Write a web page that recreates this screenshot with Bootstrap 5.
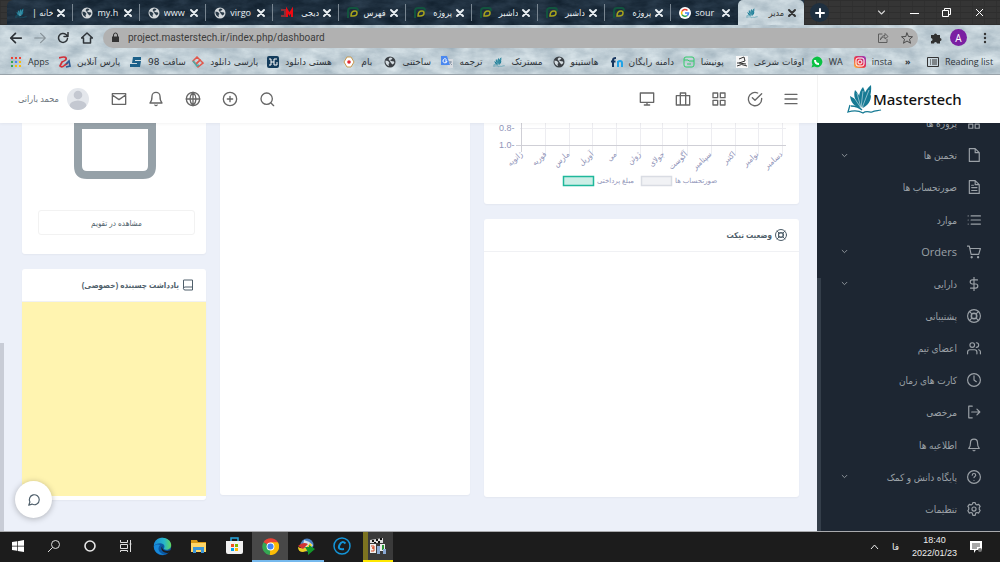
<!DOCTYPE html>
<html lang="fa">
<head>
<meta charset="utf-8">
<meta name="viewport" content="width=device-width, initial-scale=1">
<title>مدیر</title>
<link href="https://cdn.jsdelivr.net/npm/bootstrap@5.3.0/dist/css/bootstrap.min.css" rel="stylesheet">
<script src="https://cdn.jsdelivr.net/npm/bootstrap@5.3.0/dist/js/bootstrap.bundle.min.js"></script>
<style>
body{font-family:"Open Sans","DejaVu Sans Condensed","DejaVu Sans",sans-serif;font-size:10px;line-height:14px;color:#4e5e6a;background:#ecf0f9;overflow:hidden}
a{color:inherit;text-decoration:none}
button{border:0;background:none;padding:0;color:inherit}
svg{display:block;flex:none}
.ln{fill:none;stroke:currentColor;stroke-width:2;stroke-linecap:round;stroke-linejoin:round}
.i12{width:12px;height:12px}.i14{width:14px;height:14px}.i16{width:16px;height:16px}
.dim{fill:#d4d8db;color:#2a3b49}.dark{fill:#3b4045;color:#d3dbe0}
/* browser */
.strip{height:25px;background:repeating-linear-gradient(0deg,#2e2e2e 0 1px,transparent 1px 6px),repeating-linear-gradient(90deg,#303030 0 1px,#353535 1px 12px);padding-left:7px}
.tabs-dark{min-width:0;height:25px;border-radius:6px 0 0 0;background:url("data:image/svg+xml,%3Csvg xmlns='http://www.w3.org/2000/svg' width='800' height='25'%3E%3Cfilter id='a' x='0' y='0' width='100%25' height='100%25' color-interpolation-filters='sRGB'%3E%3CfeTurbulence type='fractalNoise' baseFrequency='.05 .12' numOctaves='5' seed='8'/%3E%3CfeColorMatrix values='.16 0 0 0 .04 .18 0 0 0 .095 .2 0 0 0 .145 0 0 0 0 1'/%3E%3C/filter%3E%3Crect width='800' height='25' filter='url(%23a)'/%3E%3C/svg%3E") #203141;color:#e8eef2}
.tab{min-width:0;flex:1 1 0;height:25px;padding:0 5px 0 8px;border-right:1px solid transparent;font-size:9px}
.tab:nth-child(-n+10){border-image:linear-gradient(transparent 20%,#788590 20% 80%,transparent 80%) 1}
.tab span{flex:1 1 0;min-width:0;overflow:hidden;white-space:nowrap;margin:0 2px 0 4px}
.stone{background:url("data:image/svg+xml,%3Csvg xmlns='http://www.w3.org/2000/svg' width='1000' height='50'%3E%3Cfilter id='a' x='0' y='0' width='100%25' height='100%25' color-interpolation-filters='sRGB'%3E%3CfeTurbulence type='fractalNoise' baseFrequency='.05 .1' numOctaves='5' seed='3'/%3E%3CfeColorMatrix values='.28 0 0 0 .615 .25 0 0 0 .685 .22 0 0 0 .73 0 0 0 0 1'/%3E%3C/filter%3E%3Crect width='1000' height='50' filter='url(%23a)'/%3E%3C/svg%3E") #c5d1d9;color:#2f3439}
.tab.on{border-radius:5px 5px 0 0;color:#333}
.plus{width:19px;height:19px;border-radius:50%;background:#1f3040;color:#fff;margin-left:6px}
.wins{width:196px}
.tools{height:25px;padding:0 9px}
.tools .nav-b{width:24px;margin-right:0}
.omni{height:20px;border-radius:10px;background:#b1b1b1;color:#4a4a4a;padding:0 5px 0 8px;margin-left:10px}
.omni input{border:0;background:none;padding:0;outline:0;color:#3c3c3c;font:10px/14px Roboto,sans-serif;height:18px;min-width:0}
.avatar-a{width:17px;height:17px;border-radius:50%;background:#7b1fa2;color:#fff}
.marks{display:grid;grid-template-columns:minmax(0,49fr) minmax(0,71fr) minmax(0,62fr) minmax(0,75fr) minmax(0,76fr) minmax(0,41fr) minmax(0,57fr) minmax(0,52fr) minmax(0,59fr) minmax(0,58fr) minmax(0,72fr) minmax(0,53fr) minmax(0,75fr) minmax(0,43fr) minmax(0,51fr) minmax(0,22fr) minmax(0,73fr);height:25px;padding-left:10px;border-bottom:1px solid #9aa4ab;align-items:center;font-size:9px}
.marks a{display:flex;align-items:center;gap:6px;white-space:nowrap;min-width:0}
.marks [dir=rtl]{font-family:"DejaVu Sans",sans-serif;font-size:9px}
/* app */
.app-head{height:48px;background:#fff;box-shadow:0 1px 3px #0000000d;position:relative;z-index:2;color:#666}
.app-head nav button{width:37px;height:30px}
.app-head nav+nav button{width:36px}
.userbar{padding-left:18px}
.brand{width:183px;padding-left:28px;border-left:1px solid #f2f2f2;color:#111;font:500 15px/20px "Noto Sans",sans-serif}
.brand span{margin-left:-9px}
.main{min-height:0;overflow:hidden;border-bottom:1px solid #a9aaad;position:relative}
.cols{display:grid;grid-template-columns:184fr 250fr 315fr;gap:14px;padding:0 18px 0 22px;align-items:start}
.panel{background:#fff;border-radius:3px;overflow:hidden;box-shadow:0 1px 2px #0000000a}
.panel.cut{border-radius:0 0 3px 3px}
.panel h2{font-size:8px;line-height:14px;font-weight:700;margin:0;height:33px;padding:0 12px;gap:3px;border-bottom:1px solid #f0f1f4}
.cal{height:131px;padding:0 11px 19px 16px}
.cal svg{margin-left:35px}
.btn-cal{height:25px;border:1px solid #f2f2f2;border-radius:3px;color:#4e5e6a;font-size:8px}
.note{display:block;width:100%;height:194px;background:#fff4b0;border:0;resize:none;outline:0}
.thumb{width:4px;background:#c8ccd6}
.chat{left:15px;bottom:13px;width:37px;height:37px;border-radius:50%;background:#fff;box-shadow:0 1px 6px #0004;color:#4e5e6a}
.side{width:183px;background:#1d2632;color:#9ba1a7;position:relative;padding-bottom:6px}
.side ul{margin:-16px 0 0;padding:0;flex:1}
.side li{flex:1 1 0;display:flex;min-height:0}
.side a{display:flex;align-items:center;gap:10px;width:100%;padding:0 19px 0 24px;font-size:10px}
.side .en{font-size:11px}
.side .bar{left:0;bottom:0;width:4px;height:62%;background:#343e4a}
.task{height:30px;background:#1c1c1c;color:#eee}
.task .tb{width:36px;height:30px;border-bottom:2px solid transparent}
.task .act{background:#484848;border-color:#76b9ed}.task .run{border-color:#76b9ed}
.task .film{width:30px;margin-left:3px;background:linear-gradient(90deg,#7c7320 5px,#3a3a3a 5px);border-color:#ffe800}
.tray{gap:13px;padding-right:18px;font:9px/13px "Liberation Sans","DejaVu Sans",sans-serif}
</style>
</head>
<body class="vh-100 d-flex flex-column">
<svg width="0" height="0" class="position-absolute" aria-hidden="true"><defs>
<symbol id="x" viewBox="0 0 12 12"><path d="M3 3l6 6M9 3l-6 6"/></symbol>
<symbol id="earth" viewBox="0 0 12 12"><circle cx="6" cy="6" r="5.500"/><path fill="currentColor" d="M1.500 4.500C2.500 5 3.500 4.500 4.500 5.500L5.500 7 4.500 8 5 10C2.500 9.500 1 7 1.500 4.500zM6 1.500L8.500 2 7.500 3.500 6 4 7 5 10 5.500 10.300 7 8.500 8.500 7 7 5.500 4.500 4.500 3z"/></symbol>
<symbol id="quill" viewBox="0 0 36 30"><g fill="#167a94"><path d="M15 24C7 22 5 18 4 12c6 3 9 6 11 12z"/><path d="M15 24C9 17 7 12 9 6c5 5 7 11 6 18z"/><path d="M15 24C12 16 12 9 17 3c4 7 2 14-2 21z"/><path d="M16 24C16 14 18 7 25 1c1 9-2 17-9 23z"/><path d="M17 24c2-8 4-11 8-13 0 6-3 10-8 13z"/></g><path d="M15 24L7 12M15 24L11 9M15 24L17 7M16 24L23 6" stroke="#fff" stroke-width=".5"/><path d="M4 21L2 28c6-2 10-2 15 1 4-3 7 0 9-1 3-2 6-1 9-2M5 22c5 0 8 1 11 4" fill="none" stroke="#167a94" stroke-width="1.300"/></symbol>
<symbol id="pine" viewBox="0 0 12 12"><path d="M1 11V4q0-3 3-3h5q2 0 2 3" fill="none" stroke="#12543e" stroke-width="2"/><path d="M4 9q0-5 4-5 2 0 2 2 0 3-4 3z" fill="none" stroke="#a9a51c" stroke-width="1.500"/></symbol>
<symbol id="life" viewBox="0 0 24 24"><circle cx="12" cy="12" r="11"/><circle cx="12" cy="12" r="5"/><path d="M4 4l4 4M16 16l4 4M20 4l-4 4M8 16l-4 4M8 8h8v8H8z"/></symbol>
<symbol id="bell" viewBox="0 0 24 24"><path d="M18 8A6 6 0 0 0 6 8c0 7-3 10-3 10h18s-3-3-3-10M13.700 21a2 2 0 0 1-3.400 0"/></symbol>
<symbol id="grid4" viewBox="0 0 24 24"><path d="M3 3h7v7H3zM14 3h7v7h-7zM14 14h7v7h-7zM3 14h7v7H3z"/></symbol>
<symbol id="down" viewBox="0 0 24 24"><path stroke-width="3" d="M4 8l8 8 8-8"/></symbol>
</defs></svg>

<header>
<div class="strip d-flex">
 <div class="tabs-dark d-flex flex-grow-1">
  <div class="tab d-flex align-items-center"><svg class="i12"><use href="#quill"/></svg><span dir="rtl">خانه |</span><svg class="i12 ln"><use href="#x"/></svg></div>
  <div class="tab d-flex align-items-center"><svg class="i12 dim"><use href="#earth"/></svg><span>my.h</span><svg class="i12 ln"><use href="#x"/></svg></div>
  <div class="tab d-flex align-items-center"><svg class="i12 dim"><use href="#earth"/></svg><span>www</span><svg class="i12 ln"><use href="#x"/></svg></div>
  <div class="tab d-flex align-items-center"><svg class="i12 dim"><use href="#earth"/></svg><span>virgo</span><svg class="i12 ln"><use href="#x"/></svg></div>
  <div class="tab d-flex align-items-center"><svg class="i12" viewBox="0 0 12 12" fill="none" stroke-width="2"><path d="M0 3h4v6H0" stroke="#8a3038"/><path d="M6 10V3l2.500 4L11 3v7" stroke="#f00a12"/></svg><span dir="rtl">دیجی</span><svg class="i12 ln"><use href="#x"/></svg></div>
  <div class="tab d-flex align-items-center"><svg class="i12"><use href="#pine"/></svg><span dir="rtl">فهرس</span><svg class="i12 ln"><use href="#x"/></svg></div>
  <div class="tab d-flex align-items-center"><svg class="i12"><use href="#pine"/></svg><span dir="rtl">پروژه</span><svg class="i12 ln"><use href="#x"/></svg></div>
  <div class="tab d-flex align-items-center"><svg class="i12"><use href="#pine"/></svg><span dir="rtl">داشبر</span><svg class="i12 ln"><use href="#x"/></svg></div>
  <div class="tab d-flex align-items-center"><svg class="i12"><use href="#pine"/></svg><span dir="rtl">داشبر</span><svg class="i12 ln"><use href="#x"/></svg></div>
  <div class="tab d-flex align-items-center"><svg class="i12"><use href="#pine"/></svg><span dir="rtl">پروژه</span><svg class="i12 ln"><use href="#x"/></svg></div>
  <div class="tab d-flex align-items-center"><svg class="i12" viewBox="0 0 12 12"><circle cx="6" cy="6" r="6" fill="#fff"/><g fill="none" stroke-width="1.600"><path d="M8.500 3.500A3.500 3.500 0 0 0 3 4.300" stroke="#ea4335"/><path d="M3 4.300a3.500 3.500 0 0 0 0 3.400" stroke="#fbbc05"/><path d="M3 7.700a3.500 3.500 0 0 0 5 1" stroke="#34a853"/><path d="M8 8.700A3.500 3.500 0 0 0 9.500 6H6" stroke="#4285f4"/></g></svg><span>sour</span><svg class="i12 ln"><use href="#x"/></svg></div>
  <div class="tab on stone d-flex align-items-center"><svg class="i12"><use href="#quill"/></svg><span dir="rtl">مدیر</span><svg class="i12 ln"><use href="#x"/></svg></div>
 </div>
 <div class="wins d-flex align-items-center flex-shrink-0 text-white pe-3">
  <button class="plus d-flex align-items-center justify-content-center" aria-label="New tab"><svg class="i12 ln" viewBox="0 0 12 12"><path d="M6 2v8M2 6h8"/></svg></button>
  <div class="d-flex align-items-center justify-content-between ms-5 flex-grow-1">
   <button aria-label="Search tabs"><svg class="ln" width="9" height="9" opacity=".8"><use href="#down"/></svg></button>
   <button aria-label="Minimize"><svg width="9" height="10"><path d="M0 5.500h9" stroke="#fff"/></svg></button>
   <button aria-label="Restore"><svg width="9" height="9" fill="none" stroke="#fff"><path d="M.5 2.500h6v6h-6zM2.500 2.500v-2h6v6h-2"/></svg></button>
   <button aria-label="Close"><svg width="9" height="9"><path d="M1 1l7 7M8 1L1 8" stroke="#fff"/></svg></button>
  </div>
 </div>
</div>
<div class="stone">
 <div class="tools d-flex align-items-center">
  <button class="nav-b" aria-label="Back"><svg class="i14 ln" viewBox="0 0 24 24"><path stroke-width="3" d="M21 12H3l8-8M3 12l8 8"/></svg></button>
  <button class="nav-b" aria-label="Forward"><svg class="i14 ln" opacity=".4" viewBox="0 0 24 24"><path d="M3 12h18l-8-8M21 12l-8 8"/></svg></button>
  <button class="nav-b" aria-label="Reload"><svg class="i12 ln" viewBox="0 0 24 24"><path stroke-width="3" d="M21 13a9 9 0 1 1-3-8l3 3M22 1v8h-8"/></svg></button>
  <button aria-label="Home"><svg class="i12 ln" viewBox="0 0 24 24"><path stroke-width="3" d="M1 12L12 2l11 10h-4v10H5V12z"/></svg></button>
  <div class="omni d-flex align-items-center flex-grow-1 gap-2">
   <svg width="9" height="11" viewBox="0 0 9 11"><path d="M1 4.500h7V10H1z" fill="#333"/><path d="M2.500 5V3a2 2 0 0 1 4 0v2" fill="none" stroke="#333"/></svg>
   <input class="flex-grow-1" type="text" value="project.masterstech.ir/index.php/dashboard" aria-label="Address">
   <button aria-label="Share" class="me-1"><svg class="i12 ln" viewBox="0 0 24 24" opacity=".8"><path d="M10 4H3v17h17v-6M7 15c1-6 5-8 9-8V3l6 6-6 5v-4c-4 0-7 1-9 5z"/></svg></button>
   <button aria-label="Bookmark"><svg class="i12 ln" viewBox="0 0 24 24"><path d="M12 2l3 7 8 .500-6 5 2 8-7-4.500-7 4.500 2-8-6-5L9 9z"/></svg></button>
  </div>
  <button class="ms-2 me-2 ps-1" aria-label="Extensions"><svg class="i12" viewBox="0 0 12 12" fill="#303030"><path d="M1 3h3a1.500 1.500 0 1 1 3 0h3v3a1.500 1.500 0 1 1 0 3v2.500H7a1.500 1.500 0 0 0-3 0H1V9a1.500 1.500 0 0 0 0-3z"/></svg></button>
  <button class="avatar-a d-flex align-items-center justify-content-center" aria-label="Profile">A</button>
  <button class="ms-3 me-1" aria-label="Menu"><svg width="4" height="12"><g fill="#333"><circle cx="2" cy="2" r="1.200"/><circle cx="2" cy="6" r="1.200"/><circle cx="2" cy="10" r="1.200"/></g></svg></button>
 </div>
 <nav class="marks" aria-label="Bookmarks">
  <a href="#"><svg class="i12" viewBox="0 0 12 12"><path d="M1 1h2v2H1zM5 1h2v2H5zM9 1h2v2H9z" fill="#ea4335"/><path d="M1 5h2v2H1zM1 9h2v2H1z" fill="#34a853"/><path d="M5 5h2v2H5z" fill="#4285f4"/><path d="M9 5h2v2H9zM5 9h2v2H5zM9 9h2v2H9z" fill="#fbbc05"/></svg>Apps</a>
  <a href="#"><svg class="i12" viewBox="0 0 12 12" fill="none" stroke-width="1.700"><path d="M0 2q6-2 7 0T3 6L1 10q2 2 5-1l3-2" stroke="#d22f38"/><path d="M7 8l3-3 1 5-4 1" stroke="#2c5b94"/></svg><span dir="rtl">پارس آنلاین</span></a>
  <a href="#"><svg class="i12" viewBox="0 0 12 12"><path d="M3 1h8v3H5v1h6l-1 6H0V8h7V7H2z" fill="#1c6089"/></svg><span dir="rtl">سافت 98</span></a>
  <a href="#"><svg class="i12" viewBox="0 0 12 12" fill="none" stroke-width="1.500"><path d="M1 5l4-4 3 3-4 4zM3 7L1 5" stroke="#e1574b"/><path d="M4 8l4-4 3 3-5 4z" stroke="#e1574b"/><path d="M1 5l4 5 2-1" stroke="#4eaaa5"/></svg><span dir="rtl">پارسی دانلود</span></a>
  <a href="#"><svg class="i12" viewBox="0 0 12 12"><rect width="12" height="12" rx="2" fill="#143c5c"/><path d="M2 3h2v6H2M4 6h3M10 3H7v6h3V6" stroke="#fff" fill="none"/></svg><span dir="rtl">هستی دانلود</span></a>
  <a href="#"><svg class="i12" viewBox="0 0 12 12"><path d="M4 1h4l3 5-3 5H4L1 6z" fill="#fff" stroke="#c79a50"/><circle cx="6" cy="6" r="1.800" fill="#e2252f"/></svg><span dir="rtl">بام</span></a>
  <a href="#"><svg class="i12 dark"><use href="#earth"/></svg><span dir="rtl">ساختنی</span></a>
  <a href="#"><svg class="i12" viewBox="0 0 12 12"><path d="M5 3h7v9H7z" fill="#d7dbe0"/><path d="M0 0h6l3 9H0z" fill="#4b88ef"/><path d="M5.500 3.500A2 2 0 1 0 6 5H4" stroke="#fff" fill="none"/><path d="M8 6h3M9 5q0 3 2 4" stroke="#8b98a8" fill="none"/></svg><span dir="rtl">ترجمه</span></a>
  <a href="#"><svg class="i12"><use href="#quill"/></svg><span dir="rtl">مسترتک</span></a>
  <a href="#"><svg class="i12 dark"><use href="#earth"/></svg><span dir="rtl">هاستینو</span></a>
  <a href="#"><svg class="i12" viewBox="0 0 12 12" fill="none" stroke-width="2"><path d="M2 11V4q0-2 3-2M0 5.500h4.500" stroke="#17365e"/><path d="M7 11V5M7 7q0-2 2-2t2 2v4" stroke="#1fa2e6"/></svg><span dir="rtl">دامنه رایگان</span></a>
  <a href="#"><svg class="i12" viewBox="0 0 12 12" fill="none" stroke="#31ca6a"><rect x="1" y="1" width="10" height="10" rx="2"/><path d="M1 4h4l1 1h5M4 8h4"/></svg><span dir="rtl">پونیشا</span></a>
  <a href="#"><svg class="i12" viewBox="0 0 12 12"><path d="M0 0h12v12H0z" fill="#f7f7f7"/><path d="M3 3l5-2 1 4-6 2 7 1M1 10q4-3 10 0M2 6v2" stroke="#333" fill="none"/></svg><span dir="rtl">اوقات شرعی</span></a>
  <a href="#"><svg class="i12" viewBox="0 0 12 12"><path d="M.5 11.500l1-3a5.300 5.300 0 1 1 2 2z" fill="#0ac143"/><path d="M4 4q0 4 4 4" stroke="#fff" stroke-width="2" fill="none"/></svg>WA</a>
  <a href="#"><svg class="i12" viewBox="0 0 12 12"><defs><linearGradient id="ig" x1="0" y1="1" x2="1" y2="0"><stop stop-color="#fdc141"/><stop offset=".5" stop-color="#e8334c"/><stop offset="1" stop-color="#8f35c5"/></linearGradient></defs><rect width="12" height="12" rx="3" fill="url(#ig)"/><g fill="none" stroke="#fff"><rect x="2" y="2" width="8" height="8" rx="2"/><circle cx="6" cy="6" r="2"/></g></svg>insta</a>
  <a href="#" class="fw-bold" aria-label="More">»</a>
  <a href="#"><svg class="i12" viewBox="0 0 12 12" fill="none" stroke="#333"><path d="M.5 1.500h11v9H.5zM3 4h1M5 4h5M3 6h1M5 6h5M3 8h1M5 8h5"/></svg>Reading list</a>
 </nav>
</div>
</header>

<div class="app-head d-flex">
 <div class="userbar d-flex align-items-center justify-content-between flex-grow-1 pe-2">
  <nav class="d-flex align-items-center" aria-label="User">
   <a href="#" class="d-flex align-items-center gap-2 me-2 pe-1 text-secondary"><span dir="rtl" style="font-size:9px">محمد بارانی</span>
   <svg width="22" height="22" viewBox="0 0 22 22"><clipPath id="av"><circle cx="11" cy="11" r="11"/></clipPath><g clip-path="url(#av)"><path fill="#e4e7ec" d="M0 0h22v22H0z"/><circle cx="11" cy="7" r="4.300" fill="#c4c8d1"/><ellipse cx="11" cy="18" rx="8.500" ry="5.500" fill="#c4c8d1"/></g></svg></a>
   <button class="d-flex align-items-center justify-content-center" aria-label="Messages"><svg class="i16 ln" viewBox="0 0 24 24"><path d="M2 4h20v16H2zM2 6l10 7 10-7"/></svg></button>
   <button class="d-flex align-items-center justify-content-center" aria-label="Notifications"><svg class="i16 ln"><use href="#bell"/></svg></button>
   <button class="d-flex align-items-center justify-content-center" aria-label="Language"><svg class="i16 ln" viewBox="0 0 24 24"><circle cx="12" cy="12" r="10"/><path d="M2 12h20M12 2v20M12 2c-6 6-6 14 0 20M12 2c6 6 6 14 0 20"/></svg></button>
   <button class="d-flex align-items-center justify-content-center" aria-label="Add"><svg class="i16 ln" viewBox="0 0 24 24"><circle cx="12" cy="12" r="10"/><path d="M12 8v8M8 12h8"/></svg></button>
   <button class="d-flex align-items-center justify-content-center" aria-label="Search"><svg class="i16 ln" viewBox="0 0 24 24"><circle cx="11.500" cy="11.500" r="8.500"/><path d="M18 18l4 4"/></svg></button>
  </nav>
  <nav class="d-flex align-items-center" aria-label="Shortcuts">
   <button class="d-flex align-items-center justify-content-center" aria-label="Screen"><svg class="i16 ln" viewBox="0 0 24 24"><path d="M2 3h20v14H2zM8 21h8M12 17v4"/></svg></button>
   <button class="d-flex align-items-center justify-content-center" aria-label="Projects"><svg class="i16 ln" viewBox="0 0 24 24"><path d="M2 7h20v14H2zM8 21V3h8v18"/></svg></button>
   <button class="d-flex align-items-center justify-content-center" aria-label="Apps"><svg class="i16 ln"><use href="#grid4"/></svg></button>
   <button class="d-flex align-items-center justify-content-center" aria-label="Tasks"><svg class="i16 ln" viewBox="0 0 24 24"><path d="M22 11v1a10 10 0 1 1-6-9M22 4L12 14l-4-4"/></svg></button>
   <button class="d-flex align-items-center justify-content-center" aria-label="Menu"><svg class="i16 ln" viewBox="0 0 24 24"><path d="M3 5h18M3 12h18M3 19h18"/></svg></button>
  </nav>
 </div>
 <a href="#" class="brand d-flex align-items-center flex-shrink-0"><svg width="36" height="30"><use href="#quill"/></svg><span>Masterstech</span></a>
</div>

<div class="main d-flex flex-grow-1">
 <main class="flex-grow-1 position-relative">
  <div class="cols">
   <div class="d-grid" style="gap:15px">
    <section class="panel cut cal d-flex flex-column justify-content-between">
     <svg width="84" height="57" viewBox="0 0 84 57"><path d="M5-20v63q0 9 9 9h56q9 0 9-9V-20M5 2h74" fill="none" stroke="#96a1a8" stroke-width="8"/></svg>
     <button class="btn-cal w-100" dir="rtl">مشاهده در تقویم</button>
    </section>
    <section class="panel pb-1">
     <h2 class="d-flex align-items-center" dir="rtl"><svg class="i12 ln" viewBox="0 0 24 24"><path d="M4 2h17v20H6q-3 0-3-3V3zM3 18q1-2 3-2h15"/></svg><label for="note">یادداشت چسبنده (خصوصی)</label></h2>
     <textarea id="note" class="note"></textarea>
    </section>
   </div>
   <section class="panel cut" style="height:372px"></section>
   <div class="d-grid" style="gap:15px">
    <section class="panel cut">
     <svg viewBox="0 0 315 81" width="100%" font-family="Liberation Sans, DejaVu Sans, sans-serif" fill="#9094b8" font-size="8">
      <path d="M36 5.500h266M61.500 0v32M85.500 0v32M108.500 0v32M132.500 0v32M156.500 0v32M178.500 0v32M203.500 0v32M227.500 0v32M251.500 0v32M274.500 0v32M298.500 0v32" stroke="#ededf1" fill="none"/>
      <path d="M32 22.500h270M37.500 0v29" stroke="#cfcfd6" fill="none"/>
      <text x="15" y="8" font-size="9">0.8-</text><text x="15" y="25" font-size="9">1.0-</text>
      <g text-anchor="end" font-size="8" font-family="DejaVu Sans Condensed, DejaVu Sans, sans-serif">
      <text transform="translate(39 32)rotate(-42)">ژانویه</text><text transform="translate(63 32)rotate(-42)">فوریه</text><text transform="translate(86 32)rotate(-42)">مارس</text><text transform="translate(110 32)rotate(-42)">آوریل</text><text transform="translate(133 32)rotate(-42)">می</text><text transform="translate(157 32)rotate(-42)">ژوئن</text><text transform="translate(181 32)rotate(-42)">جولای</text><text transform="translate(204 32)rotate(-42)">آگوست</text><text transform="translate(228 32)rotate(-42)">سپتامبر</text><text transform="translate(252 32)rotate(-42)">اکتبر</text><text transform="translate(275 32)rotate(-42)">نوامبر</text><text transform="translate(299 32)rotate(-42)">دسامبر</text></g>
      <path d="M79.500 53.500h30v9h-30z" fill="#cceee6" stroke="#1fb89b" stroke-width="1.500"/><path d="M157.500 53.500h30v9h-30z" fill="#f1f2f5" stroke="#d9dce3" stroke-width="1.500"/>
      <text x="113" y="60" font-size="7">مبلغ پرداختی</text><text x="191" y="60" font-size="7">صورتحساب ها</text>
     </svg>
    </section>
    <section class="panel" style="height:278px"><h2 class="d-flex align-items-center" dir="rtl"><svg class="i12 ln"><use href="#life"/></svg>وضعیت تیکت</h2></section>
   </div>
  </div>
  <div class="thumb position-absolute start-0 bottom-0" style="height:46%"></div>
  <button class="chat position-absolute d-flex align-items-center justify-content-center" aria-label="Chat"><svg class="i14 ln" viewBox="0 0 24 24"><path d="M21 11.500a8.500 8.500 0 0 1-12.500 7.500L3 21l2-5.500a8.500 8.500 0 1 1 16-4z"/></svg></button>
 </main>
 <aside class="side d-flex flex-column flex-shrink-0" dir="rtl">
  <ul class="list-unstyled d-flex flex-column">
   <li><a href="#"><svg class="i14 ln"><use href="#grid4"/></svg>پروژه ها</a></li>
   <li><a href="#"><svg class="i14 ln" viewBox="0 0 24 24"><path d="M4 1h10l7 7v15H4zM14 1v7h7"/></svg>تخمین ها<svg class="ln me-auto" width="7" height="7"><use href="#down"/></svg></a></li>
   <li><a href="#"><svg class="i14 ln" viewBox="0 0 24 24"><path d="M4 1h10l7 7v15H4zM14 1v7h7M8 9h3M8 13h9M8 18h9"/></svg>صورتحساب ها</a></li>
   <li><a href="#"><svg class="i14 ln" viewBox="0 0 24 24"><path d="M7 5h16M7 12h16M7 19h16M2 5h0M2 12h0M2 19h0"/></svg>موارد</a></li>
   <li><a href="#" class="en"><svg class="i14 ln" viewBox="0 0 24 24"><path d="M0 2h4l3 14h13l3-10H5"/><circle cx="8" cy="21" r="1"/><circle cx="19" cy="21" r="1"/></svg>Orders<svg class="ln me-auto" width="7" height="7"><use href="#down"/></svg></a></li>
   <li><a href="#"><svg class="i14 ln" viewBox="0 0 24 24"><path d="M12 0v24M18 5H9a3.500 3.500 0 0 0 0 7h6a3.500 3.500 0 0 1 0 7H6"/></svg>دارایی<svg class="ln me-auto" width="7" height="7"><use href="#down"/></svg></a></li>
   <li><a href="#"><svg class="i14 ln"><use href="#life"/></svg>پشتیبانی</a></li>
   <li><a href="#"><svg class="i14 ln" viewBox="0 0 24 24"><path d="M17 22v-3a4 4 0 0 0-4-4H5a4 4 0 0 0-4 4v3M23 22v-3a4 4 0 0 0-3-4M16 3a4 4 0 0 1 0 8"/><circle cx="9" cy="7" r="4"/></svg>اعضای تیم</a></li>
   <li><a href="#"><svg class="i14 ln" viewBox="0 0 24 24"><circle cx="12" cy="12" r="11"/><path d="M12 5v7l4 3"/></svg>کارت های زمان</a></li>
   <li><a href="#"><svg class="i14 ln" viewBox="0 0 24 24"><path d="M9 2H3v20h6M8 12h14M17 7l5 5-5 5"/></svg>مرخصی</a></li>
   <li><a href="#"><svg class="i14 ln"><use href="#bell"/></svg>اطلاعیه ها</a></li>
   <li><a href="#"><svg class="i14 ln" viewBox="0 0 24 24"><circle cx="12" cy="12" r="11"/><path d="M9 9a3 3 0 0 1 6 0c0 2-3 2-3 4M12 18h0"/></svg>پایگاه دانش و کمک<svg class="ln me-auto" width="7" height="7"><use href="#down"/></svg></a></li>
   <li><a href="#"><svg class="i14 ln" viewBox="0 0 24 24"><circle cx="12" cy="12" r="3.500"/><path d="M10 1h4l1 3 2 1 3-1 2.500 3.500-1.500 2v3l1.500 2L20 19l-3-1-2 1-1 4h-4l-1-4-2-1-3 1-2.500-4L3 12.500v-3l-1.500-2L4 4l3 1 2-1z"/></svg>تنظیمات</a></li>
  </ul>
  <div class="bar position-absolute"></div>
 </aside>
</div>

<footer class="task d-flex align-items-center justify-content-between">
 <div class="d-flex">
  <button class="tb d-flex align-items-center justify-content-center" aria-label="Start"><svg class="i12" viewBox="0 0 12 12" fill="#fff"><path d="M0 2l5-.7v4.400H0zM5.700 1.200L12 0v5.700H5.700zM0 6.400h5v4.400L0 10zM5.700 6.400H12V12l-6.300-1z"/></svg></button>
  <button class="tb d-flex align-items-center justify-content-center" aria-label="Search"><svg class="i12" viewBox="0 0 12 12" fill="none" stroke="#ddd"><circle cx="7.500" cy="4.500" r="4"/><path d="M4.500 7.500L0 12"/></svg></button>
  <button class="tb d-flex align-items-center justify-content-center" aria-label="Cortana"><svg class="i12" viewBox="0 0 12 12"><circle cx="6" cy="6" r="5" fill="none" stroke="#e8e8e8" stroke-width="1.600"/></svg></button>
  <button class="tb d-flex align-items-center justify-content-center" aria-label="Task view"><svg class="i12" viewBox="0 0 12 12" fill="none" stroke="#ddd"><path d="M.5 0v2.500h7V0M.5 4.500h7v4h-7zM.5 12v-1.500h7V12M10.500 0v12M9.500 4h2"/></svg></button>
  <button class="tb d-flex align-items-center justify-content-center" aria-label="Edge"><svg width="19" height="19" viewBox="0 0 24 24"><defs><linearGradient id="eg" x2="1"><stop stop-color="#1789d8"/><stop offset=".6" stop-color="#28b7c9"/><stop offset="1" stop-color="#62d65b"/></linearGradient></defs><circle cx="12" cy="12" r="11" fill="#0c59a4"/><path d="M1 12C1 4 7 1 12 1c7 0 11 5 11 9s-3 6-6 6-4-1-3-2 1-6-5-6-8 4-8 4z" fill="url(#eg)"/><path d="M9 10c-5 5 0 12 6 12-8 2-14-4-14-10 2-3 6-3 8-2z" fill="#1789d8"/><path d="M12 11c-2 4 3 8 9 6l2-1c-1 2-2 3-3 4-7 1-12-5-8-9z" fill="#1c1c1c"/></svg></button>
  <button class="tb d-flex align-items-center justify-content-center" aria-label="Files"><svg width="17" height="15" viewBox="0 0 17 15"><path d="M1 1h6l1 2h8v4H1z" fill="#d99a16"/><path d="M1 4h15v9H1z" fill="#ffd667"/><path d="M3 8h11v6h-3v-3H6v3H3z" fill="#3d97d8"/></svg></button>
  <button class="tb d-flex align-items-center justify-content-center" aria-label="Store"><svg width="17" height="18" viewBox="0 0 17 18"><path d="M5 5V1h7v4" fill="none" stroke="#28a8e0" stroke-width="1.500"/><path d="M0 4h17v11q0 2-2 2H2q-2 0-2-2z" fill="#f1f1f1"/><path d="M5 7h3v3H5z" fill="#f25022"/><path d="M9 7h3v3H9z" fill="#7fba00"/><path d="M5 11h3v3H5z" fill="#00a4ef"/><path d="M9 11h3v3H9z" fill="#ffb900"/></svg></button>
  <button class="tb act d-flex align-items-center justify-content-center" aria-label="Chrome"><svg width="17" height="17" viewBox="0 0 24 24"><path d="M12 12L2 6a12 12 0 0 1 20.500 0z" fill="#ea4335"/><path d="M12 12L2 6a12 12 0 0 0 9 18z" fill="#34a853"/><path d="M12 12l-1 12A12 12 0 0 0 22.500 6H12z" fill="#fbbc05"/><circle cx="12" cy="12" r="5.500" fill="#fff"/><circle cx="12" cy="12" r="4.300" fill="#4285f4"/></svg></button>
  <button class="tb run d-flex align-items-center justify-content-center" aria-label="Download manager"><svg width="18" height="17" viewBox="0 0 18 17"><circle cx="10" cy="7" r="6.500" fill="#4c83c3"/><path d="M7 2q5 1 9 5l-4 5-6-4z" fill="#d7e4ed"/><path d="M1 9q7 4 12-4l2 2q-3 6-9 7-5 0-5-5z" fill="#edcf24"/><path d="M1 8q5-5 10-2L6 11z" fill="#d23431"/><path d="M8 9h4V7l6 4-7 6v-3z" fill="#14962a"/></svg></button>
  <button class="tb d-flex align-items-center justify-content-center" aria-label="Cleaner"><svg width="18" height="18" viewBox="0 0 18 18" fill="none" stroke="#1495d8"><circle cx="9" cy="9" r="8" stroke-width="1.500"/><path d="M12.500 6.500Q9 3 6.500 8t4.500 4" stroke-width="2"/></svg></button>
  <button class="tb film d-flex align-items-center justify-content-center" aria-label="Player"><svg width="18" height="18" viewBox="0 0 18 18"><path d="M1 3l13-2v5H1z" fill="#ddd"/><path d="M3 3h2v2H3zM7 2h2v2H7zM11 1h2v2h-2zM5 5h2v1H5zM9 4h2v2H9z" fill="#111"/><path d="M1 7h6v9H1zM11 7h5v7h-5z" fill="#eee"/><path d="M2 9h3v2H3h2v3H2" fill="none" stroke="#d64b24"/><path d="M14 8v5" stroke="#2b9836" stroke-width="2"/><path d="M8 9h3v8H8zM14 12h3v5h-3z" fill="#8aa9d4"/></svg></button>
 </div>
 <div class="tray d-flex align-items-center">
  <button aria-label="Hidden icons"><svg width="9" height="6"><path d="M1 5l3.500-4L8 5" fill="none" stroke="#eee"/></svg></button>
  <span dir="rtl">فا</span>
  <time class="text-center">18:40<br>2022/01/23</time>
  <button aria-label="Action center"><svg class="i12" viewBox="0 0 12 12"><path d="M0 0h12v9H6l-2 3V9H0z" fill="#fff"/><path d="M2 3h8M2 5h8M2 7h5" stroke="#222" stroke-width=".8"/><circle cx="10" cy="9" r="2" fill="#777"/></svg></button>
 </div>
</footer>
</body>
</html>
